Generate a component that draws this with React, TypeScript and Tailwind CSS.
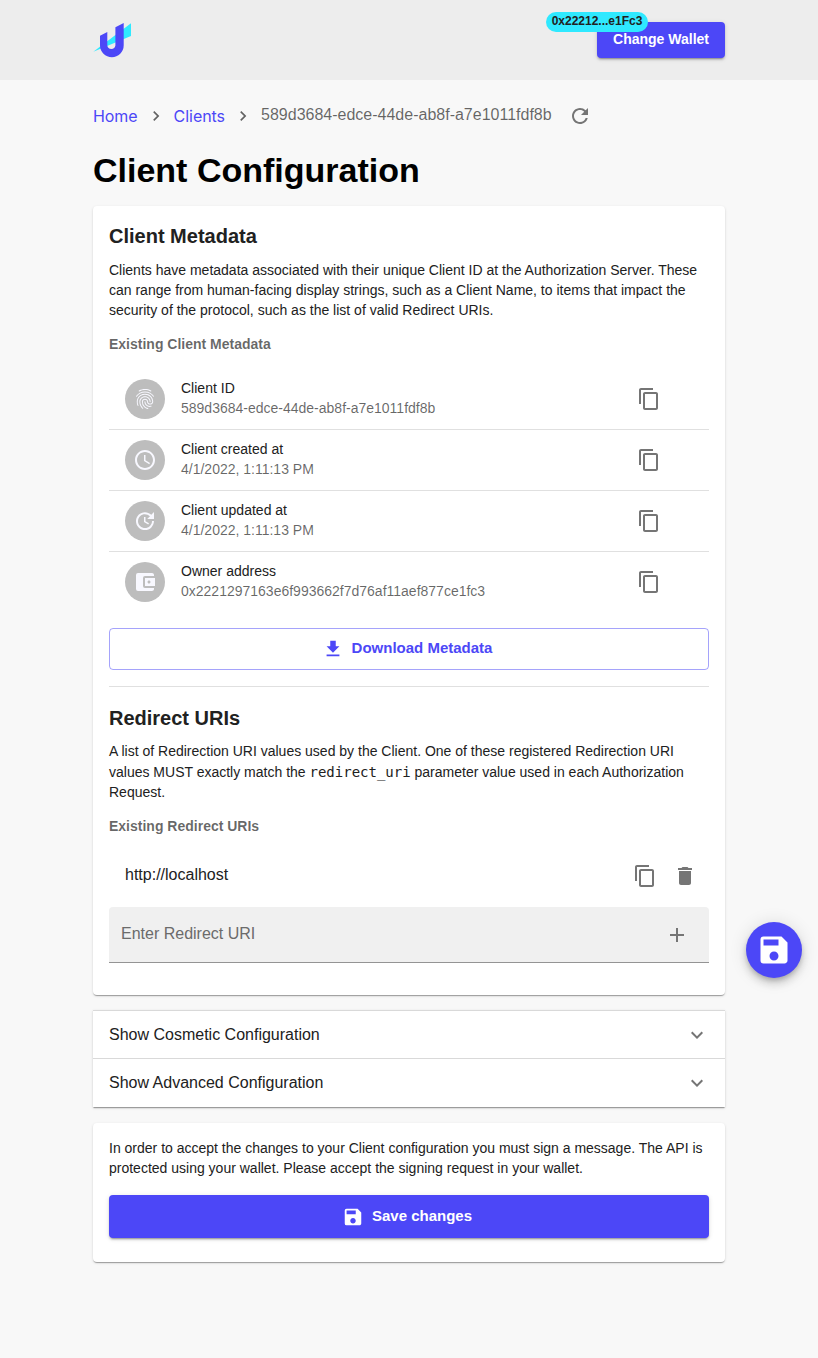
import type { ReactNode } from "react";
import {
  MdAccessTime,
  MdAccountBalanceWallet,
  MdAdd,
  MdContentCopy,
  MdDelete,
  MdExpandMore,
  MdFileDownload,
  MdFingerprint,
  MdNavigateNext,
  MdRefresh,
  MdSave,
  MdUpdate,
} from "react-icons/md";

const cardShadow =
  "shadow-[0_2px_1px_-1px_rgba(0,0,0,0.2),0_1px_1px_0_rgba(0,0,0,0.14),0_1px_3px_0_rgba(0,0,0,0.12)]";
const buttonShadow =
  "shadow-[0_3px_1px_-2px_rgba(0,0,0,0.2),0_2px_2px_0_rgba(0,0,0,0.14),0_1px_5px_0_rgba(0,0,0,0.12)]";

function Logo() {
  return (
    <svg width="38" height="36" viewBox="0 0 38 36" className="block">
      <path d="M38 1.3V14L0.3 29.8Z" fill="#2fe9ff" />
      <path
        d="M30.7 1V23.3a11.85 11.85 0 0 1-23.7 0V13.7L14.3 10V23.5a4.1 4.1 0 0 0 8.1 0V5.3Z"
        fill="#4c47f7"
      />
    </svg>
  );
}

function MetadataRow({ icon, label, value, last }: { icon: ReactNode; label: string; value: string; last?: boolean }) {
  return (
    <li className={last ? "flex h-[60px] items-center pr-12 pl-4" : "flex h-[61px] items-center border-b border-[#e0e0e0] pr-12 pl-4"}>
      <span className="mr-4 flex size-10 items-center justify-center rounded-full bg-[#bdbdbd] text-[#f8f8ff]">{icon}</span>
      <div className="flex-1 pb-0.5 text-sm leading-5">
        <p className="tracking-[0.01px]">{label}</p>
        <p className="text-black/60">{value}</p>
      </div>
      <MdContentCopy size={24} className="text-[#757575]" />
    </li>
  );
}

function Accordion({ title }: { title: string }) {
  return (
    <div className="flex h-12 items-center justify-between border-t border-[#d9d9d9] px-4">
      <span>{title}</span>
      <MdExpandMore size={24} className="mt-px text-[#757575]" />
    </div>
  );
}

export default function App() {
  return (
    <div className="min-h-[1358px] bg-[#f8f8f8] font-['Liberation_Sans',Arial,sans-serif] text-base text-[#212121]">
      <header className="h-20 bg-[#ededed]">
        <div className="mx-auto flex h-full w-[632px] items-center justify-between">
          <Logo />
          <div className="relative">
            <button className={`block h-9 w-32 rounded bg-[#4c47f7] pb-0.5 text-sm font-bold whitespace-nowrap text-white ${buttonShadow}`}>
              Change Wallet
            </button>
            <span className="absolute -top-2.5 right-[77px] flex h-5 w-[102px] items-center justify-center rounded-full bg-[#2fe9ff] pb-0.5 text-xs font-bold whitespace-nowrap text-[#212121]">
              0x22212...e1Fc3
            </span>
          </div>
        </div>
      </header>

      <main className="mx-auto w-[632px]">
        <nav className="flex h-[72px] items-center text-black/60">
          <a className="font-['Inter'] tracking-[-0.07px] text-[#4c47f7]">Home</a>
          <MdNavigateNext size={20} className="mx-2" />
          <a className="font-['Inter'] tracking-[-0.04px] text-[#4c47f7]">Clients</a>
          <MdNavigateNext size={20} className="mx-2" />
          <span className="pb-0.5">589d3684-edce-44de-ab8f-a7e1011fdf8b</span>
          <MdRefresh size={24} className="ml-4 text-[#757575]" />
        </nav>
        <h1 className="h-[54px] text-[34px] leading-9 font-bold whitespace-nowrap text-black">Client Configuration</h1>

        <section className={`h-[789px] rounded bg-white px-4 pt-[14px] ${cardShadow}`}>
          <h2 className="text-xl leading-8 font-bold">Client Metadata</h2>
          <p className="mt-2 text-sm leading-5">
            Clients have metadata associated with their unique Client ID at the Authorization Server. These
            <br />
            can range from human-facing display strings, such as a Client Name, to items that impact the
            <br />
            security of the protocol, such as the list of valid Redirect URIs.
          </p>
          <h3 className="mt-[13px] text-sm leading-[22px] font-bold text-black/60">Existing Client Metadata</h3>
          <ul className="mt-[14px]">
            <MetadataRow icon={<MdFingerprint size={24} />} label="Client ID" value="589d3684-edce-44de-ab8f-a7e1011fdf8b" />
            <MetadataRow icon={<MdAccessTime size={24} />} label="Client created at" value="4/1/2022, 1:11:13 PM" />
            <MetadataRow icon={<MdUpdate size={24} />} label="Client updated at" value="4/1/2022, 1:11:13 PM" />
            <MetadataRow icon={<MdAccountBalanceWallet size={24} />} label="Owner address" value="0x2221297163e6f993662f7d76af11aef877ce1fc3" last />
          </ul>
          <button className="mt-4 flex h-[42px] w-full items-center justify-center rounded border border-[#4c47f7]/50 text-[15px] font-bold text-[#4c47f7]">
            <MdFileDownload size={22} className="mr-2 -ml-1" />
            <span className="pb-0.5">Download Metadata</span>
          </button>
          <hr className="mt-4 border-[#e0e0e0]" />

          <h2 className="mt-[15px] text-xl leading-8 font-bold">Redirect URIs</h2>
          <p className="mt-[7px] text-sm leading-5">
            A list of Redirection URI values used by the Client. One of these registered Redirection URI
          </p>
          <p className="mt-px text-sm leading-5">
            values MUST exactly match the <code className="font-['DejaVu_Sans_Mono',monospace] text-sm">redirect_uri</code> parameter value used in each Authorization
            <br />
            Request.
          </p>
          <h3 className="mt-[13px] text-sm leading-[22px] font-bold text-black/60">Existing Redirect URIs</h3>
          <div className="mt-[14px] flex h-12 items-center pr-3 pl-4">
            <span className="flex-1">http://localhost</span>
            <MdContentCopy size={24} className="mt-px mr-4 text-[#757575]" />
            <MdDelete size={24} className="mt-px text-[#757575]" />
          </div>
          <div className="mt-2 flex h-14 items-center justify-between rounded-t border-b border-[#949494] bg-[#f0f0f0] pr-5 pl-3 text-[#6b6b6b]">
            <span className="pb-0.5">Enter Redirect URI</span>
            <MdAdd size={24} className="mt-px text-[#757575]" />
          </div>
        </section>

        <section className={`mt-[15px] h-[97px] bg-white ${cardShadow}`}>
          <Accordion title="Show Cosmetic Configuration" />
          <Accordion title="Show Advanced Configuration" />
        </section>

        <section className={`mt-4 h-[139px] rounded bg-white px-4 pt-[15px] ${cardShadow}`}>
          <p className="text-sm leading-5">
            In order to accept the changes to your Client configuration you must sign a message. The API is
            <br />
            protected using your wallet. Please accept the signing request in your wallet.
          </p>
          <button className={`mt-[17px] flex h-[43px] w-full items-center justify-center rounded bg-[#4c47f7] text-[15px] font-bold text-white ${buttonShadow}`}>
            <MdSave size={22} className="mr-2 -ml-1" />
            Save changes
          </button>
        </section>
      </main>

      <button className="fixed top-[922px] right-4 flex size-14 items-center justify-center rounded-full bg-[#4c47f7] text-white shadow-[0_3px_5px_-1px_rgba(0,0,0,0.2),0_6px_10px_0_rgba(0,0,0,0.14),0_1px_18px_0_rgba(0,0,0,0.12)]">
        <MdSave size={36} />
      </button>
    </div>
  );
}
